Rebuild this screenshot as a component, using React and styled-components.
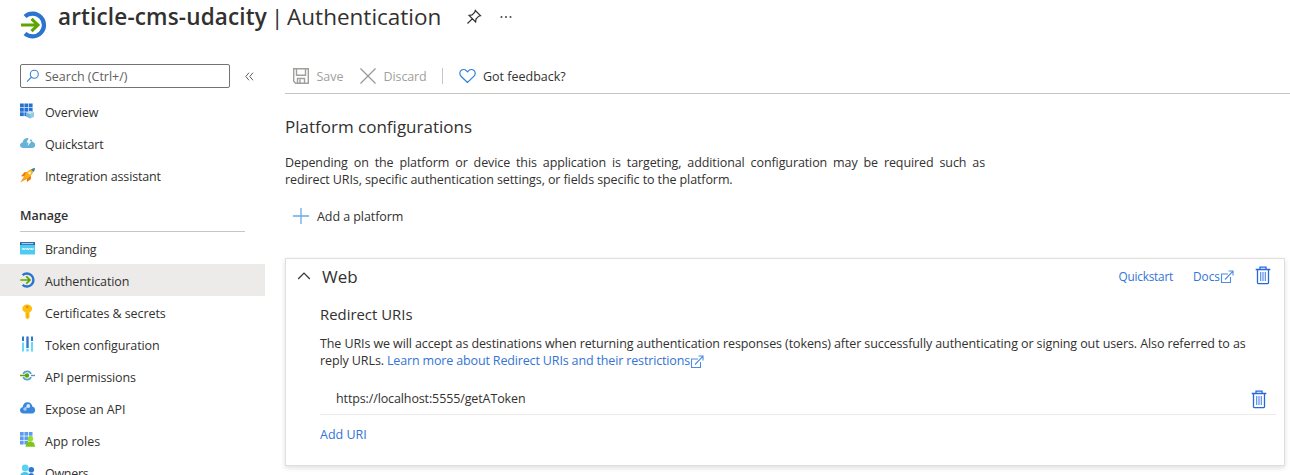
import React from "react";
import styled, { createGlobalStyle } from "styled-components";

const GlobalStyle = createGlobalStyle`
  * { box-sizing: border-box; }
  body {
    margin: 0;
    overflow: hidden;
    background: #fff;
    color: #323130;
    font-family: "Open Sans", "Noto Sans", sans-serif;
    font-size: 12.5px;
  }
  svg { display: block; flex: none; }
`;

const Page = styled.div`
  height: 475px;
  overflow: hidden;
  display: flex;
  flex-direction: column;
`;

const Header = styled.header`
  height: 59px;
  flex: none;
  display: flex;
  align-items: flex-start;
  padding-left: 21px;
`;

const LogoBox = styled.div`
  width: 37px;
  padding-top: 11px;
`;

const Title = styled.h1`
  margin: 0;
  width: 408px;
  line-height: 34px;
  font-size: 22.5px;
  font-weight: 400;
  white-space: nowrap;
`;

const Resource = styled.span`
  font-weight: 600;
  letter-spacing: 0.15px;
`;

const Section = styled.span`
  word-spacing: -2px;
  margin-left: -2px;
`;

const HeaderIcon = styled.div`
  padding-top: ${(p) => p.$top}px;
  margin-right: 18px;
`;

const Body = styled.div`
  display: flex;
  flex: 1;
  min-height: 0;
`;

const Sidebar = styled.nav`
  width: 265px;
  flex: none;
`;

const SearchRow = styled.div`
  height: 36px;
  display: flex;
  align-items: flex-start;
  padding: 5px 0 0 20px;
`;

const SearchBox = styled.div`
  width: 210px;
  height: 24px;
  display: flex;
  align-items: center;
  gap: 5px;
  padding-left: 5px;
  margin-right: 15px;
  border: 1px solid #75736f;
  border-radius: 2px;
  color: #605e5c;
`;

const Label = styled.span`
  white-space: nowrap;
  letter-spacing: ${(p) => p.$track || 0}px;
`;

const Collapse = styled.div`
  padding-top: 8px;
`;

const NavItem = styled.div`
  height: 32px;
  display: flex;
  align-items: center;
  gap: 9px;
  padding-left: 20px;
  background: ${(p) => (p.$active ? "#edebe9" : "transparent")};

  ${Label} { padding-top: 2px; }
`;

const GroupTitle = styled.div`
  height: 41px;
  margin: 0 20px;
  padding-top: 15px;
  line-height: 20px;
  border-bottom: 1px solid #c8c6c4;
  font-weight: 600;
`;

const Main = styled.main`
  flex: 1;
  min-width: 0;
  padding-left: 20px;
`;

const Toolbar = styled.div`
  height: 35px;
  display: flex;
  align-items: center;
  padding-left: 7px;
  border-bottom: 1px solid #c8c6c4;
`;

const Command = styled.div`
  display: flex;
  align-items: center;
  gap: ${(p) => (p.$disabled ? 6.5 : 7)}px;
  width: ${(p) => p.$width}px;
  color: ${(p) => (p.$disabled ? "#a19f9d" : "#323130")};
`;

const Divider = styled.div`
  width: 1px;
  height: 16px;
  margin: 0 16px 0 7px;
  background: #c8c6c4;
`;

const Heading = styled.h2`
  margin: 20px 0 0;
  line-height: 26px;
  font-size: 17px;
  font-weight: 400;
`;

const Intro = styled.p`
  margin: 14px 0 0;
  width: 700px;
  line-height: 17px;
  text-align: justify;
  letter-spacing: -0.1px;
`;

const AddPlatform = styled.div`
  display: flex;
  align-items: center;
  gap: 8px;
  height: 20px;
  margin: 18px 0 0 8px;
`;

const Card = styled.section`
  width: 1000px;
  height: 208px;
  margin-top: 32px;
  padding: 0 8px 0 34px;
  border: 1px solid #e1dfdd;
  box-shadow: 0 2px 5px rgba(0, 0, 0, 0.13);
`;

const CardHeader = styled.div`
  height: 36px;
  display: flex;
  align-items: center;
  margin-left: -23px;
  padding: 0 5px 2px 0;
`;

const CardTitle = styled.h3`
  margin: 2px auto 0 11px;
  font-size: 17px;
  line-height: 24px;
  font-weight: 400;
`;

const ExternalSvg = styled.svg`
  margin-top: 2px;
`;

const HeaderLink = styled.a`
  display: flex;
  align-items: center;
  font-size: 11.8px;
  color: #3374d4;
  margin-right: ${(p) => p.$gap}px;
`;

const DeleteButton = styled.div`
  padding-${(p) => p.$pad}: 2px;
`;

const SubHeading = styled.h4`
  margin: 8px 0 0;
  line-height: 22px;
  font-size: 14.9px;
  font-weight: 400;
`;

const Description = styled.div`
  margin-top: 10px;
  line-height: 17px;
  white-space: nowrap;
`;

const Line = styled.div`
  display: flex;
  align-items: center;
  height: 17px;
`;

const Link = styled.a`
  display: flex;
  align-items: center;
  color: #3374d4;
  margin-left: ${(p) => p.$indent || 0}px;
`;

const UriRow = styled.div`
  height: 33px;
  margin-top: 13px;
  display: flex;
  align-items: center;
  justify-content: space-between;
  padding: 0 9px 0 16px;
  border-bottom: 1px solid #edebe9;
`;

const AddUri = styled.div`
  margin-top: 10px;
  line-height: 20px;
  color: #3374d4;
`;

const SignInIcon = ({ width, height }) => (
  <svg width={width} height={height} viewBox="0 0 27 28">
    <path d="M4 5.500A11.400 11.400 0 1 1 4 22.500" fill="none" stroke="#2b74cf" strokeWidth="4.200" />
    <path d="M0 14H17M10.500 7.800L17 14l-6.500 6.200" fill="none" stroke="#5ea500" strokeWidth="3" />
  </svg>
);

const PinIcon = () => (
  <svg width="16" height="16" viewBox="0 0 16 16" fill="none" stroke="#323130" strokeWidth="1.200">
    <path d="M9.300 1.500l5.200 5.200-1.700.5-2.700 2.700-.5 3-6.500-6.500 3-.5 2.700-2.700zM6.200 9.800L1.500 14.500" />
  </svg>
);

const MoreIcon = () => (
  <svg width="13" height="4" viewBox="0 0 13 4" fill="#484644">
    <circle cx="1.500" cy="2" r="1" /><circle cx="6" cy="2" r="1" /><circle cx="10.500" cy="2" r="1" />
  </svg>
);

const SearchIcon = () => (
  <svg width="14" height="14" viewBox="0 0 14 14" fill="none" stroke="#3b83d6" strokeWidth="1.100">
    <circle cx="8.300" cy="5.200" r="4" /><path d="M5.500 8L1 12.700" />
  </svg>
);

const CollapseIcon = () => (
  <svg width="9" height="9" viewBox="0 0 9 9" fill="none" stroke="#605e5c">
    <path d="M4 .7L.8 4.500 4 8.300M8 .7L4.800 4.500 8 8.300" />
  </svg>
);

const gridCells = (rows) =>
  rows.flatMap((n, r) => Array.from({ length: n }, (_, c) => [c * 4.400, r * 4.400]));

const OverviewIcon = () => (
  <svg width="16" height="16" viewBox="0 0 16 16">
    {gridCells([3, 3, 2]).map(([x, y]) => (
      <rect key={`${x}-${y}`} x={x} y={y + 0.5} width="3.800" height="3.800" fill="#2671d1" />
    ))}
    <path d="M6 9.500l4-1.800 4 1.800v4L10 15.400 6 13.500z" fill="#74b9dc" />
    <path d="M6 9.500l4-1.800 4 1.800-4 1.700z" fill="#c4e2f1" />
    <path d="M10 11.200l4-1.700v4L10 15.400z" fill="#94cae5" />
  </svg>
);

const QuickstartIcon = () => (
  <svg width="16" height="16" viewBox="0 0 16 16">
    <path d="M3.500 13C1.300 13 0 11.800 0 10.200c0-1.500 1-2.600 2.600-2.800C3 4.600 4.900 3 7.600 3c2.600 0 4.500 1.600 4.900 4 1.600.2 2.700 1.300 2.700 3 0 1.800-1.300 3-3.200 3z" fill="#66b2d9" />
    <path d="M8.700 3L6.500 7.500h2L7.600 11l4-4.800H9.500l2-3.200z" fill="#fff" />
  </svg>
);

const RocketIcon = () => (
  <svg width="16" height="16" viewBox="0 0 16 16">
    <path d="M4.500 5.300L8 5 5 9.500 1 9.300zM10.800 8L11 12l-4 3-.3-4z" fill="#ef7512" />
    <path d="M13.800 1.800C14.200 5.500 10.500 9.800 6.500 12L4 9.500C6 5.500 9 2 13.800 1.800z" fill="#fcb40c" />
    <path d="M4.200 9.500L.5 15.300l6-3.200z" fill="#ef7512" />
    <path d="M4.600 9.900L.3 15.500l5.500-4z" fill="#fcb40c" />
    <path d="M11 2.500c1-.8 2.500-1.400 4-1.500 0 1.500-.5 2.800-1.300 4z" fill="#3579a8" />
    <circle cx="9.700" cy="6" r="1.400" fill="#e2eef6" />
  </svg>
);

const BrandingIcon = () => (
  <svg width="16" height="16" viewBox="0 0 16 16">
    <rect y="2" width="15" height="12.500" rx=".6" fill="#4dcbf1" />
    <path d="M0 2.200h15V5H0z" fill="#235ba7" />
    <path d="M1.500 3.200h12v1h-12z" fill="#d4e4f6" />
    <path d="M2 8l1 2 .8-2 .8 2 1-2M6 8l1 2 .8-2 .8 2 1-2M10 8l1 2 .8-2 .8 2 1-2" fill="none" stroke="#fff" strokeWidth=".7" />
  </svg>
);

const KeyIcon = () => (
  <svg width="16" height="16" viewBox="0 0 16 16">
    <path d="M7.200.5c2.900 0 4.900 1.700 4.900 4.100 0 1.900-1.100 3.200-2.600 3.800v5.200l-2 1.900-2-1.900V8.400C3.700 7.800 2.300 6.500 2.300 4.600 2.300 2.200 4.300.5 7.200.5z" fill="#fdbf10" />
    <circle cx="7.200" cy="3" r="1.400" fill="#f08d17" />
    <path d="M6.800 9.500h1v4h-1z" fill="#f79d14" />
  </svg>
);

const TokenIcon = () => (
  <svg width="16" height="16" viewBox="0 0 16 16">
    <path d="M2 .5h2V5H2zM6.300.5h2.400v11.500H6.300zM11 .5h2V5h-2z" fill="#2d79cf" />
    <path d="M2 6.500h2v9H2zM6.300 12.800h2.400v2.700H6.300zM11 6h2v9.500h-2z" fill="#63daf7" />
  </svg>
);

const PermissionsIcon = () => (
  <svg width="16" height="16" viewBox="0 0 16 16" fill="none">
    <path d="M3.300 6A4.100 4.100 0 0 1 11 6M3.300 9A4.100 4.100 0 0 0 11 9" stroke="#5aa1cb" strokeWidth="1.700" />
    <path d="M11 7.500h4" stroke="#4c98c4" strokeWidth="1.400" />
    <path d="M0 7.500h7" stroke="#5ea500" strokeWidth="1.500" />
    <circle cx="7" cy="7.500" r="2.200" fill="#5ea500" />
  </svg>
);

const ExposeIcon = () => (
  <svg width="16" height="16" viewBox="0 0 16 16">
    <path d="M3.500 13.500C1.300 13.500 0 12 0 10.300c0-1.600 1-2.800 2.600-3C3 4.200 4.900 2.300 7.600 2.300c2.600 0 4.500 1.900 4.900 4.400 1.600.2 2.700 1.600 2.700 3.400 0 1.900-1.300 3.400-3.200 3.400z" fill="#3986dd" />
    <path d="M4.500 9.200l3.500-3.700" stroke="#d7e8fb" strokeWidth="1" />
    <circle cx="5" cy="9" r="1.700" fill="#a7cbf3" /><circle cx="8.300" cy="6" r="1.900" fill="#d7e8fb" />
  </svg>
);

const RolesIcon = () => (
  <svg width="16" height="16" viewBox="0 0 16 16">
    {gridCells([3, 3, 2]).map(([x, y]) => (
      <rect key={`${x}-${y}`} x={x} y={y} width="3.700" height="3.700" fill="#5b9cef" />
    ))}
    <path d="M5.500 14.700l1-4 3-1.200h1.500l3 1.200 1.200 4z" fill="#7fc51c" />
    <circle cx="10.300" cy="6.900" r="2.700" fill="#98dc24" />
  </svg>
);

const OwnersIcon = () => (
  <svg width="16" height="16" viewBox="0 0 16 16">
    <path d="M8 15c0-4 .8-5.800 3.300-5.800 2.300 0 3.200 1.800 3.200 5.800z" fill="#246bc5" />
    <circle cx="11.300" cy="5.700" r="2.800" fill="#2d79d3" />
    <path d="M0 15c0-5 1-7 5-7s4.500 2 4.500 7z" fill="#4bc6ea" />
    <circle cx="5.200" cy="4" r="3.400" fill="#5bd2f2" />
  </svg>
);

const SaveIcon = () => (
  <svg width="18" height="18" viewBox="0 0 18 18" fill="none" stroke="#a19f9d" strokeWidth="1.400">
    <path d="M1.700 1.700h14.600v14.600H3.700l-2-2z" />
    <path d="M4.500 2v6.200h9V2M5.500 16v-4.500h7V16M8 12.500V16" />
  </svg>
);

const DiscardIcon = () => (
  <svg width="18" height="18" viewBox="0 0 18 18" stroke="#989694" strokeWidth="1.200">
    <path d="M1.500 1.500l15 15M16.500 1.500l-15 15" />
  </svg>
);

const HeartIcon = () => (
  <svg width="17" height="16" viewBox="0 0 17 16" fill="none" stroke="#2f82d8" strokeWidth="1.200">
    <path d="M8.500 14.500L2 8.200C.4 6.600.4 4.100 1.900 2.600s3.900-1.500 5.400 0l1.200 1.200 1.200-1.200c1.500-1.500 3.900-1.500 5.400 0s1.500 4-.1 5.600z" />
  </svg>
);

const PlusIcon = () => (
  <svg width="16" height="16" viewBox="0 0 16 16" stroke="#67aae8" strokeWidth="1.300">
    <path d="M8 0v16M0 8h16" />
  </svg>
);

const ChevronIcon = () => (
  <svg width="14" height="8" viewBox="0 0 14 8" fill="none" stroke="#323130" strokeWidth="1.200">
    <path d="M1.200 7L7 1.200 12.800 7" />
  </svg>
);

const ExternalIcon = () => (
  <ExternalSvg width="14" height="14" viewBox="0 0 14 14" fill="none" stroke="#4f8be2" strokeWidth="1.100">
    <path d="M8 4H1.500v8.500h9V7M5 9.500L12.800 1.300M8.500 1H13v4.500" />
  </ExternalSvg>
);

const TrashIcon = () => (
  <svg width="16" height="19" viewBox="0 0 16 19" fill="none" stroke="#2468de" strokeWidth="1.300">
    <path d="M.7 3.500h14.600M5 3.200V1.200h6v2M2.500 3.700v13.100q0 .8.800.8h9.400q.8 0 .8-.8V3.700" />
    <path d="M5.700 6v9M8 6v9M10.300 6v9" strokeWidth="1.100" stroke="#4b84e6" />
  </svg>
);

const topItems = [
  { text: "Overview", icon: <OverviewIcon />, track: -0.1 },
  { text: "Quickstart", icon: <QuickstartIcon />, track: -0.15 },
  { text: "Integration assistant", icon: <RocketIcon />, track: -0.15 },
];

const manageItems = [
  { text: "Branding", icon: <BrandingIcon />, track: -0.2 },
  { text: "Authentication", icon: <SignInIcon width={16} height={16} />, active: true, track: -0.1 },
  { text: "Certificates & secrets", icon: <KeyIcon />, track: -0.08 },
  { text: "Token configuration", icon: <TokenIcon />, track: -0.12 },
  { text: "API permissions", icon: <PermissionsIcon />, track: -0.14 },
  { text: "Expose an API", icon: <ExposeIcon />, track: -0.1 },
  { text: "App roles", icon: <RolesIcon />, track: 0 },
  { text: "Owners", icon: <OwnersIcon />, track: -0.3 },
];

const NavList = ({ items }) =>
  items.map(({ text, icon, active, track }) => (
    <NavItem key={text} $active={active}>
      {icon}
      <Label $track={track}>{text}</Label>
    </NavItem>
  ));

export default function App() {
  return (
    <>
      <GlobalStyle />
      <Page>
        <Header>
          <LogoBox><SignInIcon width={27} height={28} /></LogoBox>
          <Title>
            <Resource>article-cms-udacity</Resource> <Section>| Authentication</Section>
          </Title>
          <HeaderIcon $top={9}><PinIcon /></HeaderIcon>
          <HeaderIcon $top={15}><MoreIcon /></HeaderIcon>
        </Header>
        <Body>
          <Sidebar>
            <SearchRow>
              <SearchBox><SearchIcon /><Label>Search (Ctrl+/)</Label></SearchBox>
              <Collapse><CollapseIcon /></Collapse>
            </SearchRow>
            <NavList items={topItems} />
            <GroupTitle><Label>Manage</Label></GroupTitle>
            <NavList items={manageItems} />
          </Sidebar>
          <Main>
            <Toolbar>
              <Command $disabled $width={67}><SaveIcon /><Label>Save</Label></Command>
              <Command $disabled $width={76}><DiscardIcon /><Label $track={-0.1}>Discard</Label></Command>
              <Divider />
              <Command><HeartIcon /><Label>Got feedback?</Label></Command>
            </Toolbar>
            <Heading><Label>Platform configurations</Label></Heading>
            <Intro>
              Depending on the platform or device this application is targeting, additional configuration may be
              required such as redirect URIs, specific authentication settings, or fields specific to the platform.
            </Intro>
            <AddPlatform><PlusIcon /><Label $track={-0.07}>Add a platform</Label></AddPlatform>
            <Card>
              <CardHeader>
                <ChevronIcon />
                <CardTitle><Label>Web</Label></CardTitle>
                <HeaderLink $gap={20}><Label $track={-0.2}>Quickstart</Label></HeaderLink>
                <HeaderLink $gap={21}><Label>Docs</Label><ExternalIcon /></HeaderLink>
                <DeleteButton $pad="bottom"><TrashIcon /></DeleteButton>
              </CardHeader>
              <SubHeading><Label>Redirect URIs</Label></SubHeading>
              <Description>
                <Line>
                  <Label $track={-0.102}>
                    The URIs we will accept as destinations when returning authentication responses (tokens) after
                    successfully authenticating or signing out users. Also referred to as
                  </Label>
                </Line>
                <Line>
                  <Label $track={-0.1}>reply URLs.</Label>
                  <Link $indent={3}>
                    <Label $track={-0.15}>Learn more about Redirect URIs and their restrictions</Label>
                    <ExternalIcon />
                  </Link>
                </Line>
              </Description>
              <UriRow>
                <Label $track={-0.12}>https://localhost:5555/getAToken</Label>
                <DeleteButton $pad="top"><TrashIcon /></DeleteButton>
              </UriRow>
              <AddUri><Label>Add URI</Label></AddUri>
            </Card>
          </Main>
        </Body>
      </Page>
    </>
  );
}
